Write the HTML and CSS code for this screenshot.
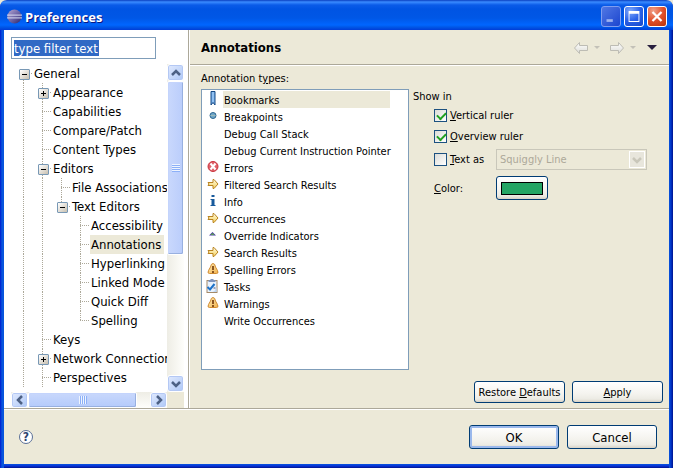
FILE: index.html
```html
<!DOCTYPE html>
<html lang="en">
<head>
<meta charset="utf-8">
<title>Preferences</title>
<link rel="stylesheet" href="styles.css">
</head>
<body>
<svg class="defs" aria-hidden="true">
  <defs>
    <linearGradient id="gold" x1="0" y1="0" x2="0" y2="1"><stop offset="0" stop-color="#fffbe0"/><stop offset="1" stop-color="#f4d05c"/></linearGradient>
    <linearGradient id="amber" x1="0" y1="0" x2="1" y2="1"><stop offset="0" stop-color="#ffeeb8"/><stop offset="1" stop-color="#f0b04a"/></linearGradient>
    <linearGradient id="silver" x1="0" y1="0" x2="0" y2="1"><stop offset="0" stop-color="#fff"/><stop offset="1" stop-color="#dcdcd6"/></linearGradient>
    <linearGradient id="orb" x1="0" y1="0" x2="1" y2="1"><stop offset="0" stop-color="#b5a6d0"/><stop offset=".5" stop-color="#6f66a8"/><stop offset="1" stop-color="#2b2468"/></linearGradient>
    <symbol id="arrow" viewBox="0 0 16 16"><path d="M2.500 6.500H7.500V3.500H8.500L12.500 8L8.500 12.500H7.500V9.500H2.500L3.500 8Z" fill="url(#gold)" stroke="#b98320"/></symbol>
    <symbol id="warn" viewBox="0 0 16 16"><path d="M7.500 2.500Q5.500 2.500 5 6L3 9.500Q1.500 12.500 4 12.500H11Q13.500 12.500 12 9.500L10 6Q9.500 2.500 7.500 2.500Z" fill="url(#amber)" stroke="#d08a30"/><path d="M6.500 5H8.500V9H6.500ZM6.500 10H8.500V12H6.500Z" fill="#8a5420"/></symbol>
    <symbol id="bookmark" viewBox="0 0 16 16"><path d="M5.500 .5H9.500V14L7.500 11.500L5.500 14Z" fill="#79b0ea" stroke="#174a85"/><path d="M7.500 1V11" stroke="#a9d0f8"/></symbol>
    <symbol id="breakpoint" viewBox="0 0 16 16"><circle cx="7.500" cy="7.500" r="3" fill="#6fa6c8" stroke="#2c6690"/><path d="M5 7.500H10" stroke="#9bb9b8"/></symbol>
    <symbol id="error" viewBox="0 0 16 16"><circle cx="7.500" cy="7.500" r="5" fill="#e0626a" stroke="#c9333d"/><path d="M5 4.500L10 10.500M10 4.500L5 10.500" stroke="#fff" stroke-width="2"/></symbol>
    <symbol id="info" viewBox="0 0 16 16"><path d="M6 2H9V4H6ZM5 6H9V12H10V13H5V12H6V7H5Z" fill="#185a9c"/></symbol>
    <symbol id="override" viewBox="0 0 16 16"><path d="M3.500 8.500L7 5L10.500 8.500Z" fill="#4b3fa0"/><path d="M5 8L7 6L9 8Z" fill="#5aa050"/></symbol>
    <symbol id="task" viewBox="0 0 16 16"><rect x="1.500" y="2.500" width="10" height="12" fill="#e8f2fd" stroke="#a58a68"/><path d="M3 4V2H5V1H8V2H10V4Z" fill="#7f95bd"/><path d="M9 13L11 9V14H7Z" fill="#bfd7f3"/><path d="M2 9L4.500 11.500L9 6" fill="none" stroke="#1d72c8" stroke-width="2"/><path d="M8 10H10" stroke="#557"/></symbol>
    <symbol id="chev" viewBox="0 0 10 10"><path d="M1 3L5 7L9 3" fill="none" stroke="currentColor" stroke-width="2.500"/></symbol>
  </defs>
</svg>
<div class="window">
  <header class="titlebar">
    <svg class="logo" viewBox="0 0 16 16"><circle cx="8" cy="8" r="7.500" fill="url(#orb)"/><path d="M0 6.500H16M0 9.500H16" stroke="#e2e6fa"/></svg>
    <h1>Preferences</h1>
    <button class="cap min" aria-label="Minimize" disabled><svg viewBox="0 0 20 20"><path d="M5 13H12V16H5Z" fill="#9db3f0"/></svg></button>
    <button class="cap" aria-label="Maximize"><svg viewBox="0 0 20 20"><path d="M4 4H16V16H4ZM5 7V15H15V7Z" fill="#fff" fill-rule="evenodd"/></svg></button>
    <button class="cap close" aria-label="Close"><svg viewBox="0 0 20 20"><path d="M5 5L15 15M15 5L5 15" stroke="#fff" stroke-width="2.500"/></svg></button>
  </header>
  <div class="body">
    <nav class="side">
      <div class="filter"><input type="text" value="type filter text" aria-label="Filter"></div>
      <div class="scroller">
        <ul class="tree">
          <li><i class="box first"></i><a href="#">General</a></li>
          <li><i class="line"></i><i class="box plus"></i><a href="#">Appearance</a></li>
          <li><i class="line"></i><i class="tee"></i><a href="#">Capabilities</a></li>
          <li><i class="line"></i><i class="tee"></i><a href="#">Compare/Patch</a></li>
          <li><i class="line"></i><i class="tee"></i><a href="#">Content Types</a></li>
          <li><i class="line"></i><i class="box"></i><a href="#">Editors</a></li>
          <li><i class="line"></i><i class="line"></i><i class="tee"></i><a href="#">File Associations</a></li>
          <li><i class="line"></i><i class="line"></i><i class="box last"></i><a href="#">Text Editors</a></li>
          <li><i class="line"></i><i class="line"></i><i></i><i class="tee"></i><a href="#">Accessibility</a></li>
          <li><i class="line"></i><i class="line"></i><i></i><i class="tee"></i><a href="#" class="selected">Annotations</a></li>
          <li><i class="line"></i><i class="line"></i><i></i><i class="tee"></i><a href="#">Hyperlinking</a></li>
          <li><i class="line"></i><i class="line"></i><i></i><i class="tee"></i><a href="#">Linked Mode</a></li>
          <li><i class="line"></i><i class="line"></i><i></i><i class="tee"></i><a href="#">Quick Diff</a></li>
          <li><i class="line"></i><i class="line"></i><i></i><i class="tee last"></i><a href="#">Spelling</a></li>
          <li><i class="line"></i><i class="tee"></i><a href="#">Keys</a></li>
          <li><i class="line"></i><i class="box plus"></i><a href="#">Network Connection</a></li>
          <li><i class="line"></i><i class="tee"></i><a href="#">Perspectives</a></li>
        </ul>
        <div class="bar vertical">
          <button aria-label="Scroll up"><svg class="up"><use href="#chev"/></svg></button>
          <div class="thumb"><span></span></div>
          <button class="end" aria-label="Scroll down"><svg><use href="#chev"/></svg></button>
        </div>
        <div class="bar horizontal">
          <button aria-label="Scroll left"><svg class="left"><use href="#chev"/></svg></button>
          <div class="thumb"><span></span></div>
          <button class="end" aria-label="Scroll right"><svg class="right"><use href="#chev"/></svg></button>
        </div>
      </div>
    </nav>
    <main>
      <div class="heading">
        <h2>Annotations</h2>
        <button class="tool" aria-label="Back" disabled><svg class="nav" viewBox="0 0 16 14"><path d="M1.500 7L6.500 1.500V4.500H14.500V9.500H6.500V12.500Z" fill="url(#silver)" stroke="#bdbcb4"/></svg></button>
        <button class="tool" aria-label="Back history" disabled><svg class="tri" viewBox="0 0 6 4"><path d="M0 0H6L3 3Z" fill="#c3c1b8"/></svg></button>
        <button class="tool" aria-label="Forward" disabled><svg class="nav" viewBox="0 0 16 14"><path d="M14.500 7L9.500 1.500V4.500H1.500V9.500H9.500V12.500Z" fill="url(#silver)" stroke="#bdbcb4"/></svg></button>
        <button class="tool" aria-label="Forward history" disabled><svg class="tri" viewBox="0 0 6 4"><path d="M0 0H6L3 3Z" fill="#c3c1b8"/></svg></button>
        <button class="tool menu" aria-label="View menu"><svg viewBox="0 0 10 6"><path d="M0 0H10L5 5Z" fill="#29203f"/></svg></button>
      </div>
      <div class="content">
        <section class="types">
          <h3 id="types">Annotation t<u>y</u>pes:</h3>
          <ul class="list" aria-labelledby="types">
            <li><svg><use href="#bookmark"/></svg><span class="selected">Bookmarks</span></li>
            <li><svg><use href="#breakpoint"/></svg><span>Breakpoints</span></li>
            <li><svg></svg><span>Debug Call Stack</span></li>
            <li><svg></svg><span>Debug Current Instruction Pointer</span></li>
            <li><svg><use href="#error"/></svg><span>Errors</span></li>
            <li><svg><use href="#arrow"/></svg><span>Filtered Search Results</span></li>
            <li><svg><use href="#info"/></svg><span>Info</span></li>
            <li><svg><use href="#arrow"/></svg><span>Occurrences</span></li>
            <li><svg><use href="#override"/></svg><span>Override Indicators</span></li>
            <li><svg><use href="#arrow"/></svg><span>Search Results</span></li>
            <li><svg><use href="#warn"/></svg><span>Spelling Errors</span></li>
            <li><svg><use href="#task"/></svg><span>Tasks</span></li>
            <li><svg><use href="#warn"/></svg><span>Warnings</span></li>
            <li><svg></svg><span>Write Occurrences</span></li>
          </ul>
        </section>
        <section class="show">
          <h3>Show in</h3>
          <div class="options">
            <label class="wide"><input type="checkbox" checked><span><u>V</u>ertical ruler</span></label>
            <label class="wide"><input type="checkbox" checked><span><u>O</u>verview ruler</span></label>
            <label><input type="checkbox"><span><u>T</u>ext as</span></label>
            <div class="select"><select aria-label="Text style" disabled><option>Squiggly Line</option></select><span><svg><use href="#chev"/></svg></span></div>
            <label for="color"><span><u>C</u>olor:</span></label>
            <button id="color" class="push swatch" aria-label="Color"><span></span></button>
          </div>
        </section>
      </div>
      <div class="actions">
        <button class="push">Restore <u>D</u>efaults</button>
        <button class="push"><u>A</u>pply</button>
      </div>
    </main>
  </div>
  <footer>
    <button class="help" aria-label="Help">?</button>
    <button class="push default">OK</button>
    <button class="push">Cancel</button>
  </footer>
</div>
</body>
</html>
```
FILE: styles.css
```css
* { box-sizing: border-box; }
body {
  margin: 0;
  background: #ece9d8;
  color: #000;
  font: 11px/17px "DejaVu Sans Condensed", "Noto Sans", sans-serif;
}
h1, h2, h3, ul { margin: 0; padding: 0; list-style: none; }
h3 { font-size: 11px; font-weight: normal; }
button, input, select { font: inherit; color: inherit; margin: 0; padding: 0; }
svg { display: block; flex: none; }
.defs { position: absolute; width: 0; height: 0; }

.window {
  display: flex;
  flex-direction: column;
  min-height: 100vh;
  padding: 0 4px 4px;
  border-radius: 7px 7px 0 0;
  background: linear-gradient(90deg, #0019cf, #0855dd 2px, #0855dd 4px, transparent 4px, transparent calc(100% - 4px), #0855dd calc(100% - 4px), #0033c8 calc(100% - 2px), #00138c),
    linear-gradient(0deg, #00138c, #0831d9 2px, #0855dd 4px, #ece9d8 4px);
}

.titlebar {
  display: flex;
  align-items: center;
  gap: 3px;
  height: 30px;
  margin: 0 -4px;
  padding: 3px 6px 0 7px;
  border-radius: 7px 7px 0 0;
  background: linear-gradient(#0a3fc0 0, #3a8bff 2px, #0a5be8 5px, #0054e3 9px, #0057e6 18px, #0066ff 25px, #0058e8 27px, #003dd7 30px);
}
.logo { width: 15px; height: 15px; }
.titlebar h1 {
  flex: 1;
  color: #fff;
  font: bold 13px/18px "Open Sans", "Noto Sans", sans-serif;
  text-shadow: 1px 1px #0a1883;
}
.cap {
  width: 20px;
  height: 21px;
  border: 1px solid #fff;
  border-radius: 3px;
  background: radial-gradient(circle at 30% 20%, #7da7fa, #2a61e8 50%, #1546c8);
}
.cap svg { width: 18px; height: 19px; }
.cap.min { border-color: #7f9df0; background: linear-gradient(135deg, #5077e4, #1c46cf); }
.cap.close { background: radial-gradient(circle at 30% 20%, #f0a088, #e0502a 50%, #b93208); }

.body { display: flex; flex: 1; border-bottom: 1px solid #aca899; }
.side {
  display: flex;
  flex-direction: column;
  gap: 5px;
  width: 185px;
  padding: 7px 4px 0 7px;
  border-right: 1px solid #aca899;
  background: #fff;
}
.filter { width: 145px; height: 22px; padding: 2px; border: 1px solid #7f9db9; }
.filter input {
  display: block;
  width: 85px;
  height: 16px;
  border: 0;
  outline: 0;
  background: #316ac5;
  color: #fff;
  font-size: 13px;
}
.scroller {
  display: grid;
  flex: 1;
  grid-template: minmax(0, 1fr) 16px / minmax(0, 1fr) 17px;
  background: #ece9d8;
}
.tree { overflow: hidden; padding-left: 3px; background: #fff; font-size: 13px; line-height: 19px; }
.tree li { display: flex; height: 19px; white-space: nowrap; }
.tree a { padding: 0 3px 0 1px; color: #000; text-decoration: none; }
.selected, .tree a.selected { background: #ece9d8; }
.tree i {
  --v: repeating-linear-gradient(#aca899 0 1px, transparent 1px 2px);
  --h: repeating-linear-gradient(90deg, #aca899 0 1px, transparent 1px 2px);
  position: relative;
  flex: none;
  width: 19px;
  background-repeat: no-repeat;
}
.tree .line { background-image: var(--v); background-position: 9px 0; background-size: 1px 19px; }
.tree .tee, .tree .box {
  background-image: var(--v), var(--h);
  background-position: 9px 0, 9px 9px;
  background-size: 1px 19px, 9px 1px;
}
.tree .last { background-size: 1px 10px, 9px 1px; }
.tree .first { background-position: 9px 10px, 9px 9px; }
.box::before {
  content: "";
  position: absolute;
  left: 5px;
  top: 5px;
  width: 9px;
  height: 9px;
  border: 1px solid #7898b5;
  border-radius: 1px;
  background: linear-gradient(#000, #000) center / 5px 1px no-repeat, linear-gradient(135deg, #fff, #c8c0b0);
}
.box.plus::before {
  background: linear-gradient(#000, #000) center / 5px 1px no-repeat, linear-gradient(#000, #000) center / 1px 5px no-repeat, linear-gradient(135deg, #fff, #c8c0b0);
}

.bar { display: flex; color: #4d6185; }
.bar.vertical { flex-direction: column; background: linear-gradient(90deg, #eeede5, #fefefb); }
.bar.horizontal { background: linear-gradient(#eeede5, #fefefb); }
.bar button {
  display: grid;
  place-items: center;
  width: 17px;
  height: 17px;
  border: 1px solid #fff;
  border-radius: 3px;
  background: linear-gradient(135deg, #e1eafe, #aec8f7);
  box-shadow: inset 0 0 0 1px #b4c8f4;
}
.horizontal button { height: 16px; }
.bar svg { width: 10px; height: 10px; }
.up { transform: rotate(180deg); }
.left { transform: rotate(90deg); }
.right { transform: rotate(-90deg); }
.bar .end { margin: auto 0 0; }
.horizontal .end { margin: 0 0 0 auto; }
.thumb {
  display: grid;
  place-items: center;
  border: 1px solid #fff;
  border-radius: 2px;
  box-shadow: inset -1px -1px #98b0e0, inset 1px 1px #c4d4fc;
}
.vertical .thumb { height: 53%; background: linear-gradient(90deg, #c9d8fc, #bacdfb); }
.horizontal .thumb { width: 70%; background: linear-gradient(#c9d8fc, #b5cbfb); }
.thumb span { width: 8px; height: 8px; background: repeating-linear-gradient(#eef4fe 0 1px, #8cb0f8 1px 2px); }
.horizontal .thumb span { background: repeating-linear-gradient(90deg, #eef4fe 0 1px, #8cb0f8 1px 2px); }

main { display: flex; flex: 1; flex-direction: column; min-width: 0; border-left: 1px solid #fff; }
.heading {
  display: flex;
  align-items: center;
  height: 35px;
  padding: 2px 12px 0 11px;
  border-bottom: 1px solid #aca899;
  box-shadow: 0 1px #fff;
}
.heading h2 { flex: 1; font: bold 13px/18px "DejaVu Sans Condensed", sans-serif; }
.tool { border: 0; background: none; }
.nav { width: 16px; height: 14px; }
.tri { width: 6px; height: 4px; margin: 0 9px 0 5px; }
.menu svg { width: 10px; height: 6px; margin-left: 2px; }
.content { display: flex; flex: 1; padding: 5px 7px 0 11px; gap: 4px; }
.types { width: 208px; }
.list { height: 281px; margin-top: 2px; padding: 1px 3px; border: 1px solid #7f9db9; background: #fff; }
.list li { display: flex; gap: 1px; height: 17px; line-height: 19px; }
.list svg { width: 17px; height: 16px; }
.list span { min-width: 167px; padding: 0 1px; white-space: nowrap; }
.show { flex: 1; padding-top: 18px; }
.options {
  display: grid;
  grid-template-columns: 62px 151px;
  grid-template-rows: 17px 17px 21px 28px;
  row-gap: 4px;
  align-items: center;
  padding: 2px 0 0 21px;
}
.options label { display: flex; align-items: center; gap: 3px; white-space: nowrap; }
.wide { grid-column: 1 / 3; }
.options input {
  appearance: none;
  width: 13px;
  height: 13px;
  border: 1px solid #1c5180;
  background: linear-gradient(135deg, #dcdcd7, #fff);
}
.options input:checked::before {
  content: "";
  display: block;
  width: 7px;
  height: 4px;
  margin: 2px;
  border: solid #21a121;
  border-width: 0 0 2px 2px;
  transform: rotate(-45deg);
}
.select { display: flex; height: 21px; padding: 1px; border: 1px solid #c9c7ba; color: #aca899; }
.select select { flex: 1; appearance: none; border: 0; padding-left: 2px; background: none; color: #aca899; opacity: 1; }
.select span { display: grid; place-items: center; width: 16px; border: 1px solid #fff; background: #e8e6dc; color: #c9c7ba; }
.select svg { width: 10px; height: 10px; }

.push {
  height: 22px;
  border: 1px solid #003c74;
  border-radius: 3px;
  background: linear-gradient(#fff, #f4f3ee 60%, #ecebe4 85%, #d8d2c6);
  white-space: nowrap;
}
.swatch { display: grid; place-items: center; width: 52px; height: 24px; }
.swatch span { width: 42px; height: 13px; border: 1px solid #000; background: #24a564; }
.actions { display: flex; justify-content: flex-end; gap: 7px; padding: 0 6px 5px; }
.actions .push { width: 91px; }
footer {
  display: flex;
  align-items: center;
  gap: 8px;
  height: 55px;
  padding: 0 12px 0 15px;
  border-top: 1px solid #fff;
}
footer .push { width: 90px; height: 24px; font-size: 13px; }
.default { box-shadow: inset 0 0 0 2px #9ab8ec; }
.help {
  width: 14px;
  height: 14px;
  margin-right: auto;
  border: 1px solid #5a6f96;
  border-radius: 50%;
  background: #fff;
  color: #2e4470;
  font: bold 12px/12px "DejaVu Sans Condensed", sans-serif;
}
```
